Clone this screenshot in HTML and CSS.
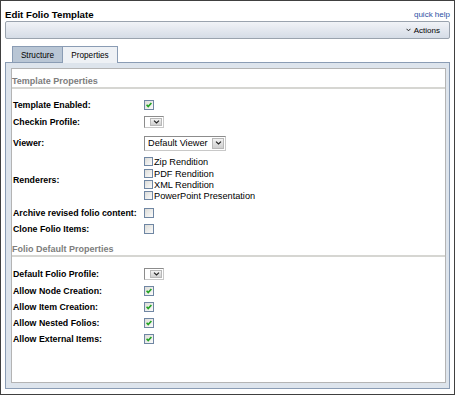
FILE: index.html
```html
<!DOCTYPE html>
<html>
<head>
<meta charset="utf-8">
<link rel="stylesheet" href="styles.css">
</head>
<body>
<div class="frame">
  <div class="head">
    <span class="title">Edit Folio Template</span>
    <a class="help" href="#">quick help</a>
  </div>
  <div class="actions">
    <svg class="chev" width="5" height="4" viewBox="0 0 5 4"><path d="M0.5 0.8 L2.5 2.8 L4.5 0.8" fill="none" stroke="#222" stroke-width="1"/></svg>
    <span>Actions</span>
  </div>
  <div class="tabs">
    <div class="tab">Structure</div>
    <div class="tab active">Properties</div>
  </div>
  <div class="panel">
    <div class="inner">
      <div class="sec">Template Properties</div>
      <div class="group">
        <div class="row h16"><span class="lbl">Template Enabled:</span><span class="cb on"><svg width="8" height="8" viewBox="0 0 8 8"><path d="M1.6 3.8 L3.2 5.6 L6.4 2" fill="none" stroke="#22a322" stroke-width="1.6"/></svg></span></div>
        <div class="row h18"><span class="lbl">Checkin Profile:</span><span class="sel small"><span class="val"></span><span class="btn"><svg width="7" height="4" viewBox="0 0 7 4"><path d="M1 0.6 L3.5 3 L6 0.6" fill="none" stroke="#222" stroke-width="1.2"/></svg></span></span></div>
        <div class="row h24"><span class="lbl">Viewer:</span><span class="sel wide"><span class="val">Default Viewer</span><span class="btn"><svg width="7" height="4" viewBox="0 0 7 4"><path d="M1 0.6 L3.5 3 L6 0.6" fill="none" stroke="#222" stroke-width="1.2"/></svg></span></span></div>
        <div class="row h50"><span class="lbl">Renderers:</span>
          <div class="list">
            <div class="opt"><span class="cb sm"></span><span>Zip Rendition</span></div>
            <div class="opt"><span class="cb sm"></span><span>PDF Rendition</span></div>
            <div class="opt"><span class="cb sm"></span><span>XML Rendition</span></div>
            <div class="opt"><span class="cb sm"></span><span>PowerPoint Presentation</span></div>
          </div>
        </div>
        <div class="row h16"><span class="lbl">Archive revised folio content:</span><span class="cb"></span></div>
        <div class="row h16"><span class="lbl">Clone Folio Items:</span><span class="cb"></span></div>
      </div>
      <div class="sec">Folio Default Properties</div>
      <div class="group">
        <div class="row h18"><span class="lbl">Default Folio Profile:</span><span class="sel small"><span class="val"></span><span class="btn"><svg width="7" height="4" viewBox="0 0 7 4"><path d="M1 0.6 L3.5 3 L6 0.6" fill="none" stroke="#222" stroke-width="1.2"/></svg></span></span></div>
        <div class="row h16"><span class="lbl">Allow Node Creation:</span><span class="cb on"><svg width="8" height="8" viewBox="0 0 8 8"><path d="M1.6 3.8 L3.2 5.6 L6.4 2" fill="none" stroke="#22a322" stroke-width="1.6"/></svg></span></div>
        <div class="row h16"><span class="lbl">Allow Item Creation:</span><span class="cb on"><svg width="8" height="8" viewBox="0 0 8 8"><path d="M1.6 3.8 L3.2 5.6 L6.4 2" fill="none" stroke="#22a322" stroke-width="1.6"/></svg></span></div>
        <div class="row h16"><span class="lbl">Allow Nested Folios:</span><span class="cb on"><svg width="8" height="8" viewBox="0 0 8 8"><path d="M1.6 3.8 L3.2 5.6 L6.4 2" fill="none" stroke="#22a322" stroke-width="1.6"/></svg></span></div>
        <div class="row h16"><span class="lbl">Allow External Items:</span><span class="cb on"><svg width="8" height="8" viewBox="0 0 8 8"><path d="M1.6 3.8 L3.2 5.6 L6.4 2" fill="none" stroke="#22a322" stroke-width="1.6"/></svg></span></div>
      </div>
    </div>
  </div>
</div>
</body>
</html>
```

FILE: styles.css
```css
* { box-sizing: border-box; }
html, body { margin: 0; padding: 0; background: #fff; }
body { font-family: "Liberation Sans", Arial, sans-serif; color: #000; }

.frame {
  width: 455px;
  height: 395px;
  border: 1px solid #404040;
  padding: 0 4px;
  display: flex;
  flex-direction: column;
}

.head {
  height: 20px;
  display: flex;
  justify-content: space-between;
  align-items: flex-end;
}
.title {
  font-weight: bold;
  font-size: 9.7px;
  line-height: 12px;
}
.help {
  font-size: 8px;
  line-height: 12px;
  color: #2b4fa3;
  text-decoration: none;
  margin-right: 0;
}

.actions {
  height: 18px;
  border: 1px solid #9aa3ae;
  border-radius: 2px;
  background: linear-gradient(#f1f3f7, #d5dce6);
  display: flex;
  justify-content: flex-end;
  align-items: center;
  padding-right: 9px;
  font-size: 8px;
  gap: 3px;
}
.chev { display: block; margin-top: -1px; }

.tabs {
  display: flex;
  margin: 7px 0 0 7px;
  position: relative;
  z-index: 1;
}
.tab {
  font-size: 8.2px;
  line-height: 11px;
  padding: 3px 0 1px;
  text-align: center;
  border: 1px solid #8a9cb4;
  border-bottom: none;
  background: #b9c6d5;
  width: 51px;
  height: 16px;
}
.tab.active {
  width: 56px;
  height: 17px;
  margin-left: -1px;
  margin-bottom: -1px;
  background: #eef1f5;
}

.panel {
  height: 327px;
  border: 1px solid #8a9cb4;
  background: #dde4ec;
  padding: 5px 3px 5px 5px;
  display: flex;
}
.inner {
  flex: 1;
  background: #fff;
  border: 1px solid #b4b4b4;
}

.sec {
  margin-top: 6px;
  height: 14px;
  line-height: 12px;
  font-size: 9px;
  font-weight: bold;
  color: #7d7d7d;
  border-bottom: 2px solid #d6d6d2;
}

.group { padding-top: 8px; }

.row {
  display: grid;
  grid-template-columns: 132px auto;
  align-items: center;
}
.h16 { height: 16px; }
.h18 { height: 18px; }
.h24 { height: 24px; }
.h50 { height: 50px; }

.lbl {
  font-weight: bold;
  font-size: 8.8px;
  padding-left: 1px;
  line-height: 11px;
}

.cb {
  width: 10px;
  height: 10px;
  border: 1px solid #6f86a3;
  background: linear-gradient(135deg, #dcdcd8, #fbfbfb);
  display: flex;
  align-items: center;
  justify-content: center;
}
.cb.sm { width: 9px; height: 9px; flex: none; }
.cb svg { display: block; }

.sel {
  display: flex;
  border: 1px solid #8c8c8c;
  border-right-color: #c8c8c8;
  border-bottom-color: #c8c8c8;
  background: #fff;
}
.sel.small { width: 20px; height: 12px; }
.sel.wide { width: 82px; height: 15px; }
.sel .val {
  flex: 1;
  font-size: 9.2px;
  line-height: 13px;
  padding-left: 3px;
  white-space: nowrap;
}
.sel .btn {
  width: 12px;
  margin: 1px;
  background: linear-gradient(#f2f2f2, #cfcfcf);
  border: 1px solid #b8b8b8;
  display: flex;
  align-items: center;
  justify-content: center;
}
.sel.small .btn { width: 12px; }

.list { display: flex; flex-direction: column; }
.opt {
  display: flex;
  align-items: flex-start;
  height: 11.33px;
  font-size: 9.2px;
  line-height: 11.33px;
}
.opt .cb { margin-top: 0; margin-right: 1px; }
```
